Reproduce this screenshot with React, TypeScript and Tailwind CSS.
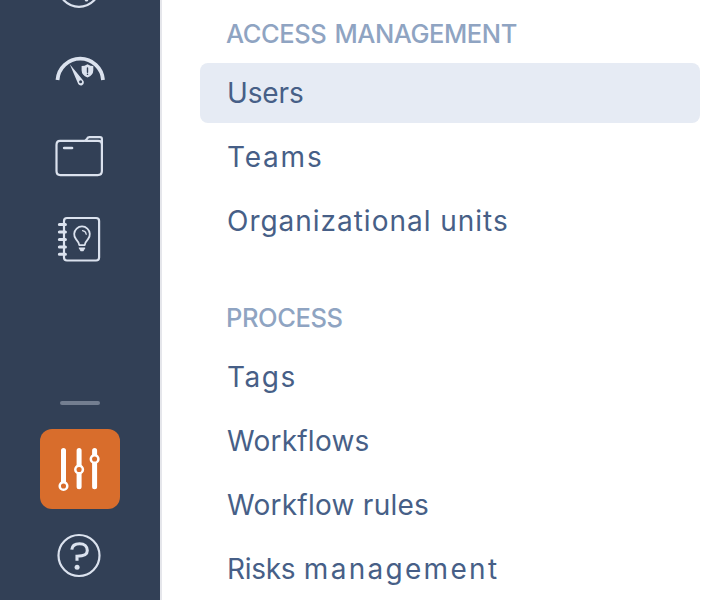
import type { ReactNode } from "react";

type Word = { text: string; tracking: string };
type Item = { words: Word[]; active?: boolean };

const access: Item[] = [
  { words: [{ text: "Users", tracking: "tracking-[-0.15px]" }], active: true },
  { words: [{ text: "Teams", tracking: "tracking-[1.8px]" }] },
  { words: [{ text: "Organizational units", tracking: "tracking-[0.98px]" }] },
];

const process: Item[] = [
  { words: [{ text: "Tags", tracking: "tracking-[1.5px]" }] },
  { words: [{ text: "Workflows", tracking: "tracking-[0.24px]" }] },
  { words: [{ text: "Workflow rules", tracking: "tracking-[0.26px]" }] },
  {
    words: [
      { text: "Risks ", tracking: "tracking-[-0.3px] [word-spacing:1px]" },
      { text: "management", tracking: "tracking-[2.3px]" },
    ],
  },
];

function Items({ items }: { items: Item[] }) {
  return (
    <ul className="flex flex-col gap-1">
      {items.map((item) => (
        <li
          key={item.words[0].text}
          className={`h-[60px] w-[500px] rounded-lg pl-[27px] text-[28px] leading-[60px] whitespace-nowrap text-[#475f87] ${item.active ? "bg-[#e6ebf4]" : ""}`}
        >
          {item.words.map((word) => (
            <span key={word.text} className={word.tracking}>{word.text}</span>
          ))}
        </li>
      ))}
    </ul>
  );
}

function Icon({ viewBox, className, children }: { viewBox: string; className: string; children: ReactNode }) {
  return (
    <svg viewBox={viewBox} className={`block w-20 shrink-0 ${className}`} fill="none" stroke="#dbe2ee" strokeWidth="2.2" strokeLinecap="round" strokeLinejoin="round">
      {children}
    </svg>
  );
}

export default function App() {
  return (
    <div className="flex h-[600px] w-[719px] overflow-hidden bg-white font-['Inter',sans-serif]">
      <nav className="flex w-[162px] shrink-0 flex-col items-start border-r-2 border-[#e5e6eb] bg-[#324056] pl-10">
        <Icon viewBox="40 0 80 30" className="h-[30px]">
          <circle cx="79" cy="-14" r="20.8" />
          <circle cx="86.5" cy="-.3" r="1.8" fill="#dbe2ee" stroke="none" />
        </Icon>
        <Icon viewBox="40 30 80 80" className="h-20">
          <path d="M57.5 80A22.8 22.8 0 0 1 103 80" strokeWidth="3.8" strokeLinecap="butt" />
          <path d="M69.8 64.3 83 80.2A3.1 3.1 0 1 1 77.7 82.8Z" fill="#dbe2ee" stroke="none" />
          <circle cx="80.6" cy="81.8" r="1.5" fill="#324056" stroke="none" />
          <path d="M87.5 64.2Q90.5 66 93.3 66.1V70.2Q93.3 75 87.5 77.5Q81.6 75 81.6 70.2V66.1Q84.5 66 87.5 64.2Z" fill="#dbe2ee" stroke="none" />
          <path d="M87.5 68V72.2M87.5 74.3V74.4" stroke="#324056" strokeWidth="1.4" />
        </Icon>
        <Icon viewBox="40 110 80 90" className="h-[90px]">
          <path d="M60 140.8H84.5Q86 140.8 87 138.8Q87.8 137.1 89.5 137.1H100Q101.9 137.1 101.9 139V171Q101.9 175.1 97.7 175.1H60.3Q56.5 175.1 56.5 171V145Q56.5 140.8 60 140.8Z" />
          <path d="M85.5 140.8H98Q101.9 140.8 101.9 144" />
          <path d="M64.2 148H72" strokeWidth="2.7" />
        </Icon>
        <Icon viewBox="40 200 80 80" className="h-20">
          <rect x="64" y="218" width="35.1" height="42.5" rx="3" />
          <path d="M59.4 224.5H65.4M59.4 232H65.4M59.4 239.5H65.4M59.4 247H65.4M59.4 254.3H65.4" strokeWidth="3.1" />
          <path d="M79.3 245.1Q79 242.7 76 239.2A7.8 7.8 0 1 1 88 239.2Q85 242.7 84.7 245.1Z" strokeWidth="1.8" />
          <path d="M82.5 230.6Q85.8 231 86.2 234.3" strokeWidth="1.2" />
          <path d="M79.3 248H84.7L83 250.7H81Z" fill="#dbe2ee" strokeWidth="1.2" />
        </Icon>
        <div className="mt-[121px] ml-5 h-1 w-10 shrink-0 rounded-full bg-[#737e90]" />
        <div className="mt-6 h-20 w-20 shrink-0 rounded-xl bg-[#d86d2c]">
          <svg viewBox="40 429 80 80" className="h-20 w-20" fill="#d86d2c" stroke="white" strokeLinecap="round">
            <path d="M63.5 450.4V482M79.1 450.4V486.8M94.6 450.4V486.8" strokeWidth="5" />
            <g strokeWidth="2.5">
              <circle cx="63.5" cy="486" r="3.8" />
              <circle cx="79.1" cy="469.5" r="3.8" />
              <circle cx="94.6" cy="459" r="3.8" />
            </g>
          </svg>
        </div>
        <Icon viewBox="40 509 80 91" className="h-[91px]">
          <circle cx="79" cy="555.5" r="20.5" />
          <path d="M71.8 549.7C72.1 545.7 75.2 543.7 79.6 543.7C84.5 543.7 87.3 546.5 87.3 550.5C87.3 554.6 84.5 556.2 77 556.2V560.8" strokeWidth="3.1" strokeLinecap="butt" strokeLinejoin="miter" />
          <circle cx="77.1" cy="567.3" r="2.5" fill="#dbe2ee" stroke="none" />
        </Icon>
      </nav>
      <main className="flex flex-col pl-[38px]">
        <h2 className="flex h-[63px] items-center pt-[6px] pl-[26px] text-[25.5px] font-medium whitespace-nowrap text-[#8fa4c2]">
          <span className="tracking-[-0.45px] [word-spacing:2px]">ACCESS MANAGEMENT</span>
        </h2>
        <Items items={access} />
        <h2 className="mt-[33px] flex h-[63px] items-center pt-[6px] pl-[26px] text-[25.5px] font-medium whitespace-nowrap text-[#8fa4c2]">
          <span className="tracking-[-0.4px]">PROCESS</span>
        </h2>
        <Items items={process} />
      </main>
    </div>
  );
}
